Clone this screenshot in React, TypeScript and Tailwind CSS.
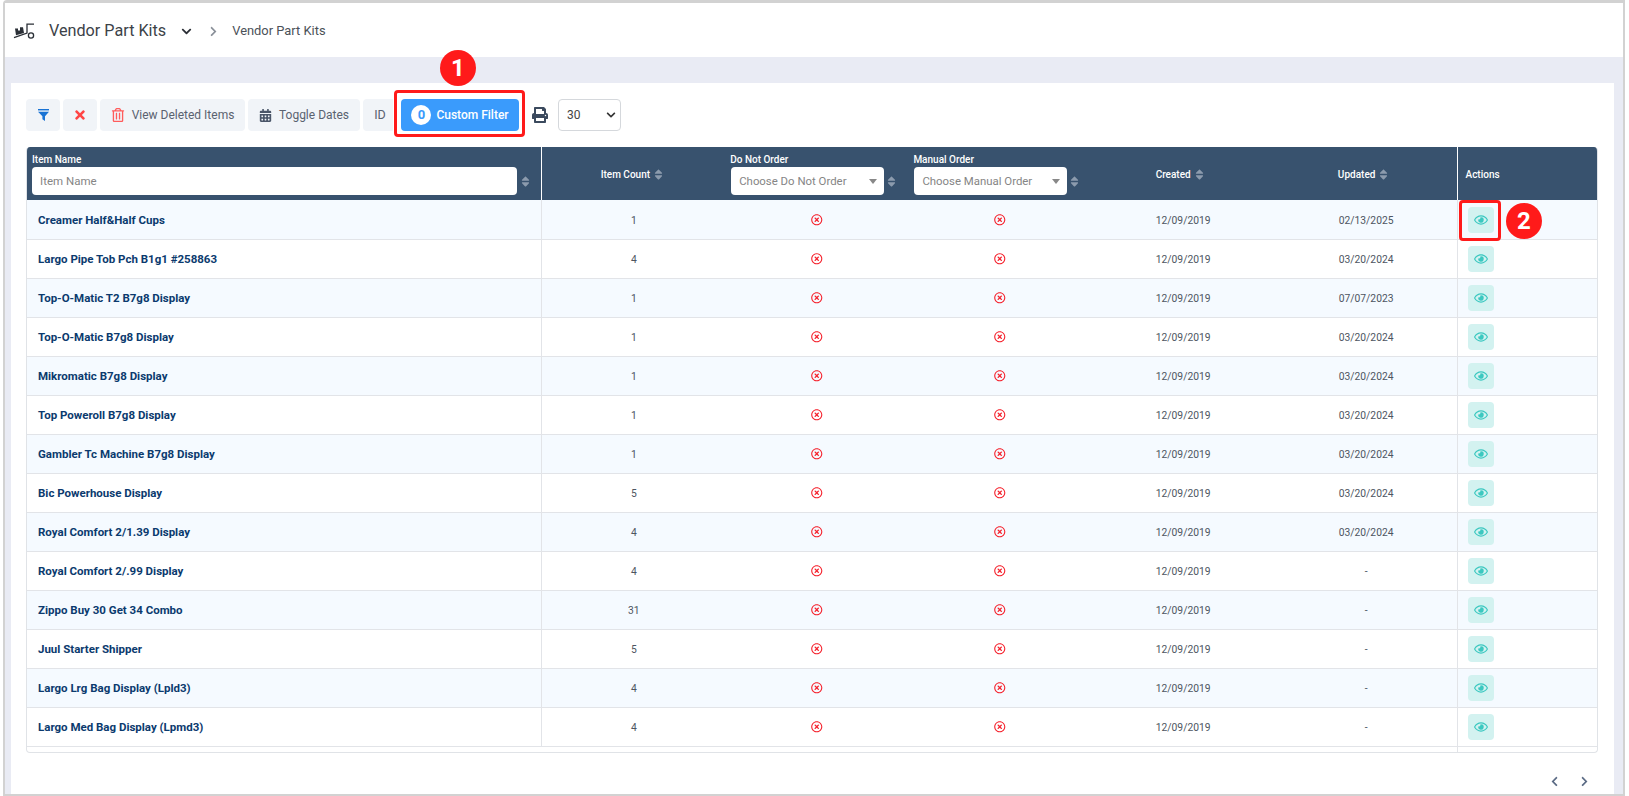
import { FaCalendarAlt, FaChevronDown, FaChevronLeft, FaChevronRight, FaPrint, FaRegEye, FaRegTimesCircle, FaRegTrashAlt, FaSort, FaTimes } from "react-icons/fa";

const rows = [
  ["Creamer Half&Half Cups", "1", "02/13/2025"],
  ["Largo Pipe Tob Pch B1g1 #258863", "4", "03/20/2024"],
  ["Top-O-Matic T2 B7g8 Display", "1", "07/07/2023"],
  ["Top-O-Matic B7g8 Display", "1", "03/20/2024"],
  ["Mikromatic B7g8 Display", "1", "03/20/2024"],
  ["Top Poweroll B7g8 Display", "1", "03/20/2024"],
  ["Gambler Tc Machine B7g8 Display", "1", "03/20/2024"],
  ["Bic Powerhouse Display", "5", "03/20/2024"],
  ["Royal Comfort 2/1.39 Display", "4", "03/20/2024"],
  ["Royal Comfort 2/.99 Display", "4", "-"],
  ["Zippo Buy 30 Get 34 Combo", "31", "-"],
  ["Juul Starter Shipper", "5", "-"],
  ["Largo Lrg Bag Display (Lpld3)", "4", "-"],
  ["Largo Med Bag Display (Lpmd3)", "4", "-"],
];

const Sort = () => <FaSort className="shrink-0 text-[13px] text-[#8c9bad]" />;

const DollyLogo = () => (
  <svg width="22" height="18" viewBox="0 0 22 18" className="-mt-[2px] shrink-0 text-[#2a2f36]">
    <path d="M2 7.5h3v2h2v-3.2h3l1 5.6-8 2.4z" fill="currentColor" />
    <path d="M1 16.6 14 12V3.2h7" fill="none" stroke="currentColor" strokeWidth="1.3" />
    <circle cx="18" cy="14.5" r="2.6" fill="none" stroke="currentColor" strokeWidth="1.3" />
  </svg>
);

const FilterIcon = () => (
  <svg width="11" height="12" viewBox="0 0 11 12" className="text-[#1a73d4]">
    <rect width="11" height="1.4" fill="currentColor" />
    <path d="M0 2.8h11L7 7.2V12L4.4 10.2V7.2z" fill="currentColor" />
  </svg>
);

function HeaderSelect({ label, placeholder }: { label: string; placeholder: string }) {
  return (
    <div className="flex items-end gap-[1px] pl-[6px]">
      <div>
        <div className="mb-[1px] text-[10px] font-medium leading-[13px] text-white">{label}</div>
        <div className="ml-[1px] flex h-[28px] w-[153px] items-center justify-between rounded-[4px] bg-white pl-[8px] pr-[7px] pt-[1px] text-[11.4px] font-normal text-[#858585]">
          {placeholder}
          <span className="h-0 w-0 border-x-[4px] border-t-[5px] border-x-transparent border-t-[#888]" />
        </div>
      </div>
      <span className="mb-[7px]"><Sort /></span>
    </div>
  );
}

function App() {
  return (
    <div className="h-[796px] w-[1629px] overflow-hidden bg-white pl-[3px] pr-[4px] font-['Roboto',sans-serif]">
      <div className="flex h-[796px] flex-col rounded-tl-[4px] border-x-2 border-b-2 border-t-[3px] border-[#d2d2d2]">
        <header className="flex h-[54px] shrink-0 items-center bg-white pl-[8px] pt-[2px]">
          <DollyLogo />
          <h1 className="ml-[14px] text-[16.2px] font-normal text-[#3c4248]">Vendor Part Kits</h1>
          <FaChevronDown className="ml-[15px] text-[11px] text-[#2b2f36]" />
          <FaChevronRight className="ml-[16px] text-[11px] text-[#8a9099]" />
          <span className="ml-[13px] text-[12.9px] text-[#4b5158]">Vendor Part Kits</span>
        </header>
        <main className="flex-1 bg-[#e9ebf4] pl-[6px] pr-[9px] pt-[26px]">
          <div className="h-full bg-white pl-[15px] pr-[16px] pt-[16px]">
            <div className="relative flex h-[32px] items-center">
              <button className="flex h-[32px] w-[34px] items-center justify-center rounded-[4px] bg-[#f1f4f8]"><FilterIcon /></button>
              <button className="ml-[3px] flex h-[32px] w-[34px] items-center justify-center rounded-[4px] bg-[#f1f4f8]"><FaTimes className="text-[14px] text-[#ff4545]" /></button>
              <button className="ml-[3px] flex h-[32px] w-[145px] items-center justify-center gap-[7px] rounded-[4px] bg-[#f1f4f8] text-[12px] text-[#5a6270]"><FaRegTrashAlt className="text-[14px] text-[#ff5c5c]" />View Deleted Items</button>
              <button className="ml-[3px] flex h-[32px] w-[112px] items-center justify-center gap-[7px] rounded-[4px] bg-[#f1f4f8] text-[12px] text-[#5a6270]"><FaCalendarAlt className="text-[13px] text-[#4a5568]" />Toggle Dates</button>
              <button className="ml-[3px] h-[32px] w-[30px] rounded-l-[4px] bg-[#f1f4f8] pl-[4px] text-[12.5px] text-[#5a6270]">ID</button>
              <button className="ml-[8px] flex h-[32px] w-[118px] items-center justify-center gap-[5px] rounded-[4px] bg-[#3a9bfc] text-[12px] font-medium text-white"><span className="flex h-[20px] w-[20px] items-center justify-center rounded-full bg-white text-[13px] font-bold text-[#3a9bfc]">0</span>Custom Filter</button>
              <FaPrint className="ml-[13px] text-[16px] text-[#3b4a5e]" />
              <div className="ml-[10px] flex h-[32px] w-[63px] items-center justify-between rounded-[4px] border border-[#d5d8dc] pl-[8px] pr-[4px] text-[12px] text-[#444]">30<FaChevronDown className="text-[10px] text-[#333]" /></div>
              <span className="absolute left-[368px] top-[-9px] h-[47px] w-[131px] rounded-[4px] border-[3px] border-[#ff1a1a]" />
              <span className="absolute left-[414px] top-[-49px] flex h-[36px] w-[36px] items-center justify-center rounded-full bg-[#ff1a1a] text-[24px] font-bold leading-none text-white">1</span>
            </div>
            <div className="relative mt-[16px] h-[606px] w-[1572px] overflow-hidden rounded-[4px] border-x border-b border-[#e0e3e7]">
              <table className="w-full table-fixed border-collapse">
                <thead>
                  <tr className="h-[53px] bg-[#38526e] text-[10px] font-medium text-white">
                    <th className="w-[514px] border-r border-white pb-[5px] pl-[5px] pr-[9px] text-left align-bottom font-medium">
                      <div className="mb-[1px] text-[10px] leading-[13px]">Item Name</div>
                      <div className="flex items-center gap-[2px]">
                        <div className="flex h-[28px] flex-1 items-center rounded-[4px] bg-white pl-[8px] pt-[1px] text-[11.5px] font-normal text-[#858585]">Item Name</div>
                        <Sort />
                      </div>
                    </th>
                    <th className="pt-[1px] font-medium"><span className="inline-flex items-center gap-[2px]">Item Count <Sort /></span></th>
                    <th className="pb-[5px] text-left align-bottom font-medium"><HeaderSelect label="Do Not Order" placeholder="Choose Do Not Order" /></th>
                    <th className="pb-[5px] text-left align-bottom font-medium"><HeaderSelect label="Manual Order" placeholder="Choose Manual Order" /></th>
                    <th className="pr-[3px] pt-[1px] font-medium"><span className="inline-flex items-center gap-[2px]">Created <Sort /></span></th>
                    <th className="border-r border-white pr-[2px] pt-[1px] font-medium"><span className="inline-flex items-center gap-[2px]">Updated <Sort /></span></th>
                    <th className="w-[140px] pl-[8px] pt-[1px] text-left font-medium">Actions</th>
                  </tr>
                </thead>
                <tbody>
                  {rows.map((r, i) => (
                    <tr key={r[0]} className={`h-[39px] border-b border-[#e2e4e8] ${i % 2 === 0 ? "bg-[#f5faff]" : "bg-white"}`}>
                      <td className="border-r border-[#e2e4e8] pl-[11px] pt-[2px] text-[11.5px] font-bold text-[#0b3a6e]">{r[0]}</td>
                      <td className="pl-[2px] pt-[2px] text-center text-[10.3px] text-[#4d5561]">{r[1]}</td>
                      <td className="pl-[2px] pt-[1px]"><FaRegTimesCircle className="mx-auto text-[11.5px] text-[#f5222d]" /></td>
                      <td className="pl-[2px] pt-[1px]"><FaRegTimesCircle className="mx-auto text-[11.5px] text-[#f5222d]" /></td>
                      <td className="pl-[2px] pt-[2px] text-center text-[10.3px] text-[#4d5561]">12/09/2019</td>
                      <td className="border-r border-[#e2e4e8] pl-[2px] pt-[2px] text-center text-[10.3px] text-[#4d5561]">{r[2]}</td>
                      <td className="pl-[10px] pt-[1px]">
                        <button className="flex h-[26px] w-[26px] items-center justify-center rounded-[4px] bg-[#d3f2f0]"><FaRegEye className="text-[14px] text-[#3cc8c0]" /></button>
                      </td>
                    </tr>
                  ))}
                  <tr className="h-[39px]">
                    <td className="border-r border-[#e2e4e8]" colSpan={6} />
                    <td />
                  </tr>
                </tbody>
              </table>
              <span className="absolute left-[1432px] top-[53px] h-[41px] w-[42px] rounded-[4px] border-[3px] border-[#ff1a1a]" />
              <span className="absolute left-[1479px] top-[56px] flex h-[36px] w-[36px] items-center justify-center rounded-full bg-[#ff1a1a] text-[24px] font-bold leading-none text-white">2</span>
            </div>
            <div className="mt-[23px] flex justify-end gap-[19px] pr-[8px] text-[11px] text-[#5b6b85]">
              <FaChevronLeft />
              <FaChevronRight />
            </div>
          </div>
        </main>
      </div>
    </div>
  );
}

export default App;
